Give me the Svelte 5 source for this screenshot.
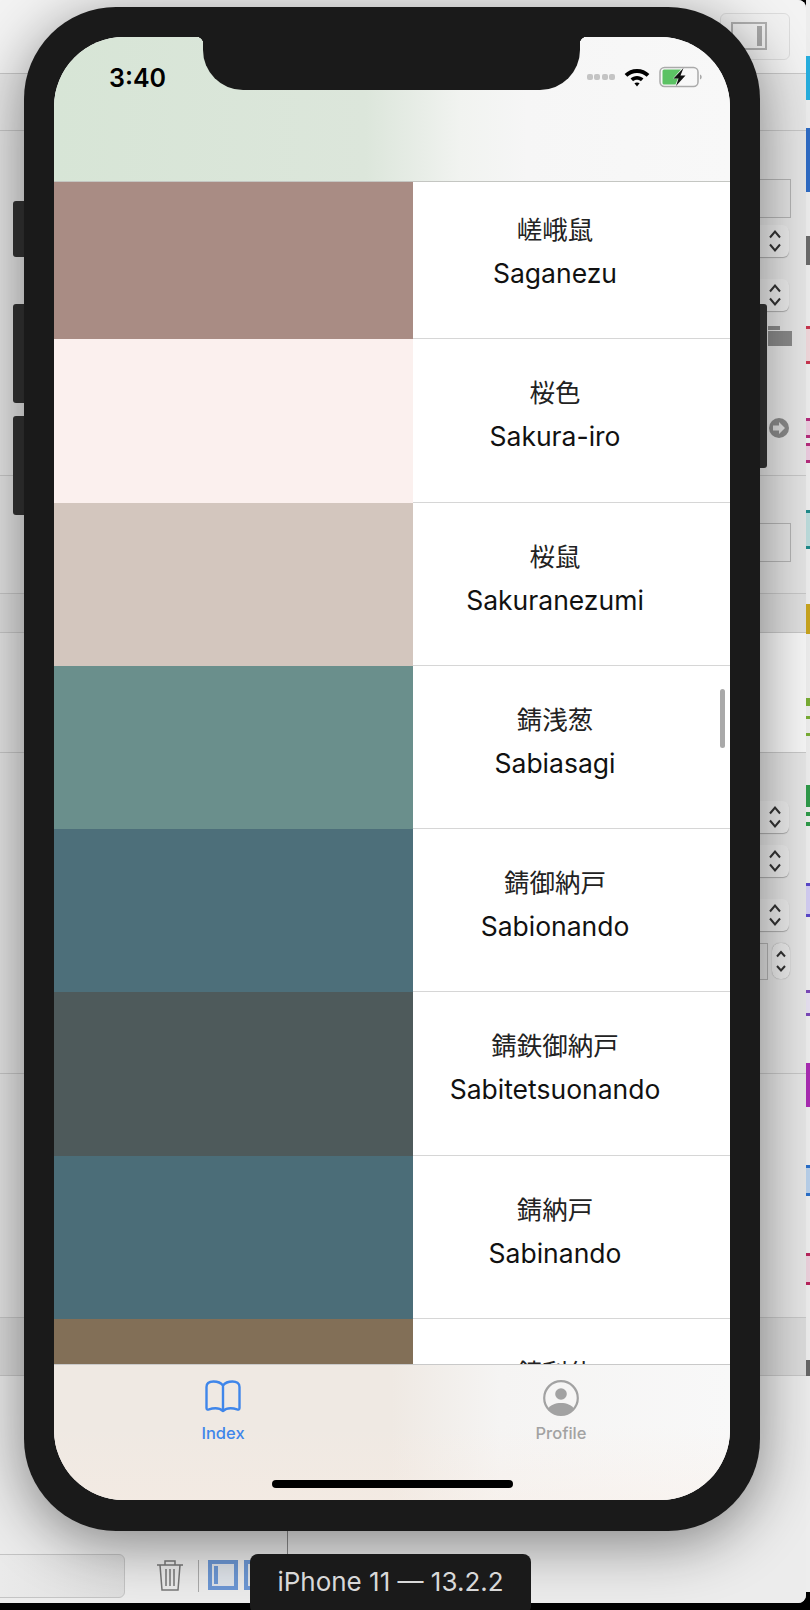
<script>
  const rows = [
    { color: '#a98c84', ja: '嵯峨鼠', en: 'Saganezu' },
    { color: '#fbf0ee', ja: '桜色', en: 'Sakura-iro' },
    { color: '#d3c6be', ja: '桜鼠', en: 'Sakuranezumi' },
    { color: '#6a8f8c', ja: '錆浅葱', en: 'Sabiasagi' },
    { color: '#4d6f7a', ja: '錆御納戸', en: 'Sabionando' },
    { color: '#4e5a5b', ja: '錆鉄御納戸', en: 'Sabitetsuonando' },
    { color: '#4b6d78', ja: '錆納戸', en: 'Sabinando' },
    { color: '#826f57', ja: '錆利休', en: '' }
  ];
  const steppers = [225, 279, 801, 845, 899];
  const hlines = [73, 130, 475, 593, 632, 752, 1073, 1317, 1375];
  const bands = [
    { top: 0, h: 73, c: '#f3f3f3' },
    { top: 73, h: 57, c: '#e8e8e8' },
    { top: 475, h: 118, c: '#e4e4e4' },
    { top: 593, h: 39, c: '#e0e0e0' },
    { top: 1317, h: 58, c: '#dcdcdc' },
    { top: 1375, h: 228, c: '#ececec' }
  ];
  const solid = [
    { top: 56, h: 44, c: '#27aede' },
    { top: 128, h: 64, c: '#2f6cc4' },
    { top: 236, h: 29, c: '#6a6a6a' },
    { top: 604, h: 30, c: '#c8a41e' },
    { top: 698, h: 8, c: '#79ad35' },
    { top: 716, h: 3, c: '#79ad35' },
    { top: 733, h: 3, c: '#79ad35' },
    { top: 785, h: 22, c: '#2f9a4a' },
    { top: 812, h: 4, c: '#2f9a4a' },
    { top: 822, h: 4, c: '#2f9a4a' },
    { top: 1063, h: 44, c: '#a92cb2' },
    { top: 1360, h: 16, c: '#666666' }
  ];
  const framed = [
    { top: 326, h: 38, c: '#c8364f', f: '#f0d6da' },
    { top: 418, h: 20, c: '#b52c7c', f: '#ecc9de' },
    { top: 443, h: 20, c: '#b52c7c', f: '#ecc9de' },
    { top: 510, h: 39, c: '#1f8a8a', f: '#bcdcdc' },
    { top: 883, h: 34, c: '#5a48c8', f: '#d2ccf2' },
    { top: 990, h: 26, c: '#7a48b8', f: '#e6e0f0' },
    { top: 1165, h: 31, c: '#2a6fc8', f: '#b8d0ea' },
    { top: 1253, h: 32, c: '#b8245c', f: '#eccfdb' }
  ];
</script>

<div class="desk">
  <div class="window">
    {#each bands as b}
      <div class="band" style="top:{b.top}px;height:{b.h}px;background:{b.c}"></div>
    {/each}
    {#each hlines as y}
      <div class="hline" style="top:{y}px"></div>
    {/each}

    <div class="topbtn"><span class="panel"><i></i></span></div>
    <div class="field" style="top:179px"></div>
    <div class="field" style="top:523px"></div>
    <div class="lightpanel"></div>

    {#each steppers as top}
      <div class="stepper" style="top:{top}px">
        <svg width="14" height="26" viewBox="0 0 14 26"><path d="M2 9.500 7 3.500 12 9.500M2 16.500 7 22.500 12 16.500" fill="none" stroke="#333" stroke-width="2"/></svg>
      </div>
    {/each}
    <div class="smallfield"></div>
    <div class="mini">
      <svg width="10" height="26" viewBox="0 0 10 26"><path d="M1 8.500 5 4 9 8.500M1 18 5 22.500 9 18" fill="none" stroke="#333" stroke-width="2"/></svg>
    </div>

    <svg class="folder" width="24" height="20" viewBox="0 0 24 20"><path d="M0 0H12V4H0ZM0 5H24V20H0Z" fill="#8a8a8a"/></svg>
    <svg class="arrow" width="20" height="20" viewBox="0 0 20 20"><circle cx="10" cy="10" r="10" fill="#8a8a8a"/><path d="M4 7.500H10V4L16 10 10 16V12.500H4Z" fill="#ddd"/></svg>

    <div class="searchbox"></div>
    <svg class="trash" width="26" height="31" viewBox="0 0 26 31" fill="none" stroke="#777" stroke-width="1.500">
      <path d="M0 5H26M8 5V1H18V5M3 5 5 30H21L23 5M9 9V26M13 9V26M17 9V26"/>
    </svg>
    <div class="sep"></div>
    <div class="layout one"><i></i></div>
    <div class="layout two"><i></i></div>
    <div class="vline"></div>
  </div>

  <div class="rail">
    {#each solid as m}
      <div class="mark" style="top:{m.top}px;height:{m.h}px;background:{m.c}"></div>
    {/each}
    {#each framed as m}
      <div class="mark framed" style="top:{m.top}px;height:{m.h}px;background:{m.f};border-color:{m.c}"></div>
    {/each}
  </div>

  <span class="btn side" style="top:201px;height:56px"></span>
  <span class="btn side" style="top:304px;height:99px"></span>
  <span class="btn side" style="top:416px;height:99px"></span>
  <span class="btn power"></span>

  <div class="phone">
    <div class="screen">
      <header class="top">
        <span class="time">3:40</span>
        <div class="status">
          <span class="dots"><i></i><i></i><i></i><i></i></span>
          <svg width="28" height="22" viewBox="0 0 26 20">
            <path d="M13 2.500C8.500 2.500 4.500 4.300 1.500 7.200L4 9.800C6.400 7.600 9.500 6.200 13 6.200S19.600 7.600 22 9.800L24.500 7.200C21.500 4.300 17.500 2.500 13 2.500Z" fill="#000"/>
            <path d="M13 9C10.700 9 8.600 9.900 7 11.500L9.400 14C10.400 13.100 11.600 12.600 13 12.600S15.600 13.100 16.600 14L19 11.500C17.400 9.900 15.300 9 13 9Z" fill="#000"/>
            <path d="M13 15C12 15 11.200 15.300 10.600 15.900L13 18.800 15.400 15.900C14.800 15.300 14 15 13 15Z" fill="#000"/>
          </svg>
          <svg width="44" height="22" viewBox="0 0 44 22">
            <rect x="1" y="1.500" width="38" height="19" rx="4.500" fill="none" stroke="#aaa" stroke-width="1.500"/>
            <path d="M3.500 5a1.500 1.500 0 0 1 1.500-1.500H22L14 12.500H19L16.500 18.500H5A1.500 1.500 0 0 1 3.500 17Z" fill="#5cc264"/>
            <path d="M24.500 2 14.500 12.500H19.500L17 20 26.500 9.500H21.500Z" fill="#111"/>
            <path d="M41 8.500C42.300 9 42.700 10 42.700 11S42.300 13 41 13.500Z" fill="#aaa"/>
          </svg>
        </div>
      </header>

      <div class="list">
        {#each rows as r}
          <div class="row">
            <div class="swatch" style="background:{r.color}"></div>
            <div class="names">
              <div class="ja">{r.ja}</div>
              {#if r.en}<div class="en">{r.en}</div>{/if}
            </div>
          </div>
        {/each}
        <span class="scroll"></span>
      </div>

      <nav class="tabs">
        <div class="tab active">
          <svg width="36" height="36" viewBox="0 0 36 36" fill="none" stroke="#3f86ea" stroke-width="2.400" stroke-linejoin="round" stroke-linecap="round">
            <path d="M18 5.500C16 2.800 12.500 1.500 8.500 1.500 4.500 1.500 1.500 3.200 1.500 7V28C1.500 29.500 2.500 30 4 29.400 6 28.700 8 28.300 10.500 28.300 13.500 28.300 16 29.200 18 31 20 29.200 22.500 28.300 25.500 28.300 28 28.300 30 28.700 32 29.400 33.500 30 34.500 29.500 34.500 28V7C34.500 3.200 31.500 1.500 27.500 1.500 23.500 1.500 20 2.800 18 5.500ZM18 5.500V31"/>
          </svg>
          <span>Index</span>
        </div>
        <div class="tab">
          <svg width="36" height="36" viewBox="0 0 36 36">
            <circle cx="18" cy="18" r="16.800" fill="none" stroke="#a2a2a2" stroke-width="2.200"/>
            <circle cx="18" cy="14" r="5.800" fill="#a2a2a2"/>
            <path d="M4.800 29C7.500 24.800 12.500 23 18 23S28.500 24.800 31.200 29C28 32.800 23.500 34.800 18 34.800S8 32.800 4.800 29Z" fill="#a2a2a2"/>
          </svg>
          <span>Profile</span>
        </div>
        <span class="home"></span>
      </nav>

      <div class="notch"></div>
    </div>
  </div>

  <div class="caption">iPhone 11 — 13.2.2</div>
</div>

<style>
  :global(body) { margin: 0; background: #000; }
  .desk {
    position: relative;
    width: 810px;
    height: 1610px;
    overflow: hidden;
    background: #000;
    font-family: Inter, "Liberation Sans", "Noto Sans CJK JP", sans-serif;
  }
  .window {
    position: absolute;
    left: 0;
    top: 0;
    width: 806px;
    height: 1603px;
    overflow: hidden;
    background: #e6e6e6;
    border-radius: 0 8px 8px 0;
  }
  .band { position: absolute; left: 0; right: 0; }
  .hline { position: absolute; left: 0; right: 0; height: 1px; background: #c8c8c8; }
  .topbtn {
    position: absolute; top: 13px; left: 720px; width: 68px; height: 45px;
    border: 1px solid #dcdcdc; border-radius: 6px; background: #f1f1f1;
  }
  .panel {
    position: absolute; left: 10px; top: 8px; width: 32px; height: 24px;
    border: 2px solid #b0b0b0; display: block;
  }
  .panel i { position: absolute; right: 3px; top: 2px; bottom: 2px; width: 5px; background: #a8a8a8; }
  .field {
    position: absolute; left: 745px; width: 44px; height: 37px;
    border: 1px solid #b5b5b5; background: #e4e4e4;
  }
  .lightpanel {
    position: absolute; left: 760px; top: 633px; right: 0; height: 119px;
    background: #f7f7f7;
  }
  .stepper {
    position: absolute; left: 745px; width: 44px; height: 32px;
    border-radius: 6px; background: #ececec; box-shadow: 0 1px 1px #aaa;
    display: flex; align-items: center; justify-content: flex-end; padding-right: 7px;
    box-sizing: border-box;
  }
  .smallfield {
    position: absolute; left: 745px; top: 943px; width: 21px; height: 35px;
    border: 1px solid #b5b5b5; background: #e4e4e4;
  }
  .mini {
    position: absolute; left: 772px; top: 943px; width: 18px; height: 36px;
    border-radius: 8px; background: #ececec; box-shadow: 0 0 1px #888;
    display: flex; align-items: center; justify-content: center;
  }
  .folder { position: absolute; left: 768px; top: 326px; }
  .arrow { position: absolute; left: 769px; top: 418px; }
  .rail {
    position: absolute; left: 806px; top: 0; width: 4px; height: 1592px;
    background: #ededed;
  }
  .mark { position: absolute; left: 0; width: 4px; box-sizing: border-box; }
  .framed { border-top: 3px solid; border-bottom: 3px solid; }
  .searchbox {
    position: absolute; left: -10px; top: 1554px; width: 133px; height: 42px;
    border: 1px solid #c4c4c4; border-radius: 6px;
    background: linear-gradient(90deg, #ebebeb, #dedede);
  }
  .trash { position: absolute; left: 157px; top: 1560px; }
  .sep { position: absolute; left: 198px; top: 1560px; width: 1px; height: 32px; background: #aaa; }
  .layout {
    position: absolute; top: 1560px; width: 22px; height: 22px;
    border: 4px solid #6c97d4; background: #dfe4ea;
  }
  .layout i { position: absolute; left: 2px; top: 2px; bottom: 2px; width: 4px; background: #6c97d4; }
  .one { left: 208px; }
  .two { left: 244px; }
  .vline { position: absolute; left: 287px; top: 1531px; width: 1px; height: 23px; background: #8a8a8a; }

  .btn { position: absolute; background: #333; border-radius: 3px 0 0 3px; }
  .side { left: 13px; width: 11px; }
  .power {
    left: 758px; top: 304px; width: 9px; height: 164px; border-radius: 0 3px 3px 0;
  }
  .phone {
    position: absolute; left: 24px; top: 7px;
    width: 736px; height: 1524px;
    box-sizing: border-box;
    padding: 30px 30px 31px;
    background: #1a1a1a;
    border-radius: 92px;
    box-shadow: 0 12px 60px rgba(0, 0, 0, .45);
  }
  .screen {
    position: relative;
    height: 100%;
    border-radius: 70px;
    overflow: hidden;
    display: flex;
    flex-direction: column;
    background: #fff;
  }
  .top {
    height: 145px;
    flex: none;
    box-sizing: border-box;
    border-bottom: 1px solid #c4c6c2;
    background: linear-gradient(90deg, #d7e5d6 0, #dce6db 46%, #e6ece5 53%, #f1f3f0 60%, #f6f6f6 70%, #f8f8f8 100%);
    display: flex;
    justify-content: space-between;
    align-items: flex-start;
    padding: 25px 27px 0 55px;
  }
  .time { font-size: 25px; font-weight: 600; line-height: 32px; color: #000; }
  .status { display: flex; align-items: center; gap: 8px; height: 32px; margin-top: -1px; }
  .dots { display: flex; gap: 1.500px; }
  .dots i { width: 6px; height: 6px; border-radius: 2px; background: #c4c4c4; }
  .list {
    position: relative;
    flex: 1;
    min-height: 0;
    overflow: hidden;
    background: #fff;
  }
  .row {
    display: flex;
    height: 163.300px;
    box-sizing: border-box;
    border-bottom: 1px solid #d6d6d6;
  }
  .row:first-child { margin-top: -6px; }
  .swatch { width: 359px; flex: none; margin-bottom: -1px; }
  .names {
    flex: 1;
    display: flex;
    flex-direction: column;
    align-items: center;
    padding: 31px 33px 0 0;
    color: #111;
    font-size: 26.500px;
  }
  .ja { line-height: 41px; font-size: 25.500px; font-family: "Noto Sans CJK JP", sans-serif; color: #222; }
  .en { line-height: 50px; }
  .scroll {
    position: absolute; right: 5px; top: 507px; width: 5px; height: 59px;
    border-radius: 3px; background: #a9a9a9;
  }
  .tabs {
    position: relative;
    height: 136px;
    flex: none;
    box-sizing: border-box;
    border-top: 1px solid #c9c9c9;
    background:
      linear-gradient(180deg, rgba(250, 236, 226, 0) 45%, rgba(250, 236, 226, .35) 100%),
      linear-gradient(90deg, #efe9e3 0, #efe9e3 50%, #f5f4f3 66%, #f8f8f8 100%);
    display: flex;
  }
  .tab {
    flex: 1;
    display: flex;
    flex-direction: column;
    align-items: center;
    padding-top: 15px;
    color: #a2a2a2;
    font-size: 16.500px;
    font-weight: 500;
  }
  .tab.active { color: #3f86ea; }
  .tab span { line-height: 22px; margin-top: 6px; }
  .home {
    position: absolute; left: 218px; top: 115px; width: 241px; height: 8px;
    border-radius: 4px; background: #000;
  }
  .notch {
    position: absolute; left: 149px; top: 0; width: 377px; height: 53px;
    background: #1a1a1a;
    border-radius: 0 0 40px 40px;
  }
  .notch::before, .notch::after {
    content: '';
    position: absolute;
    top: 0;
    width: 7px;
    height: 7px;
  }
  .notch::before { left: -7px; background: radial-gradient(circle at 0 100%, transparent 7px, #1a1a1a 7.500px); }
  .notch::after { right: -7px; background: radial-gradient(circle at 100% 100%, transparent 7px, #1a1a1a 7.500px); }
  .caption {
    position: absolute; left: 250px; top: 1554px; width: 281px; height: 60px;
    border-radius: 8px; background: #1a1a1a; color: #d8d8d8;
    font-size: 26px; display: flex; align-items: center; justify-content: center;
    padding-bottom: 6px; box-sizing: border-box;
  }
</style>
